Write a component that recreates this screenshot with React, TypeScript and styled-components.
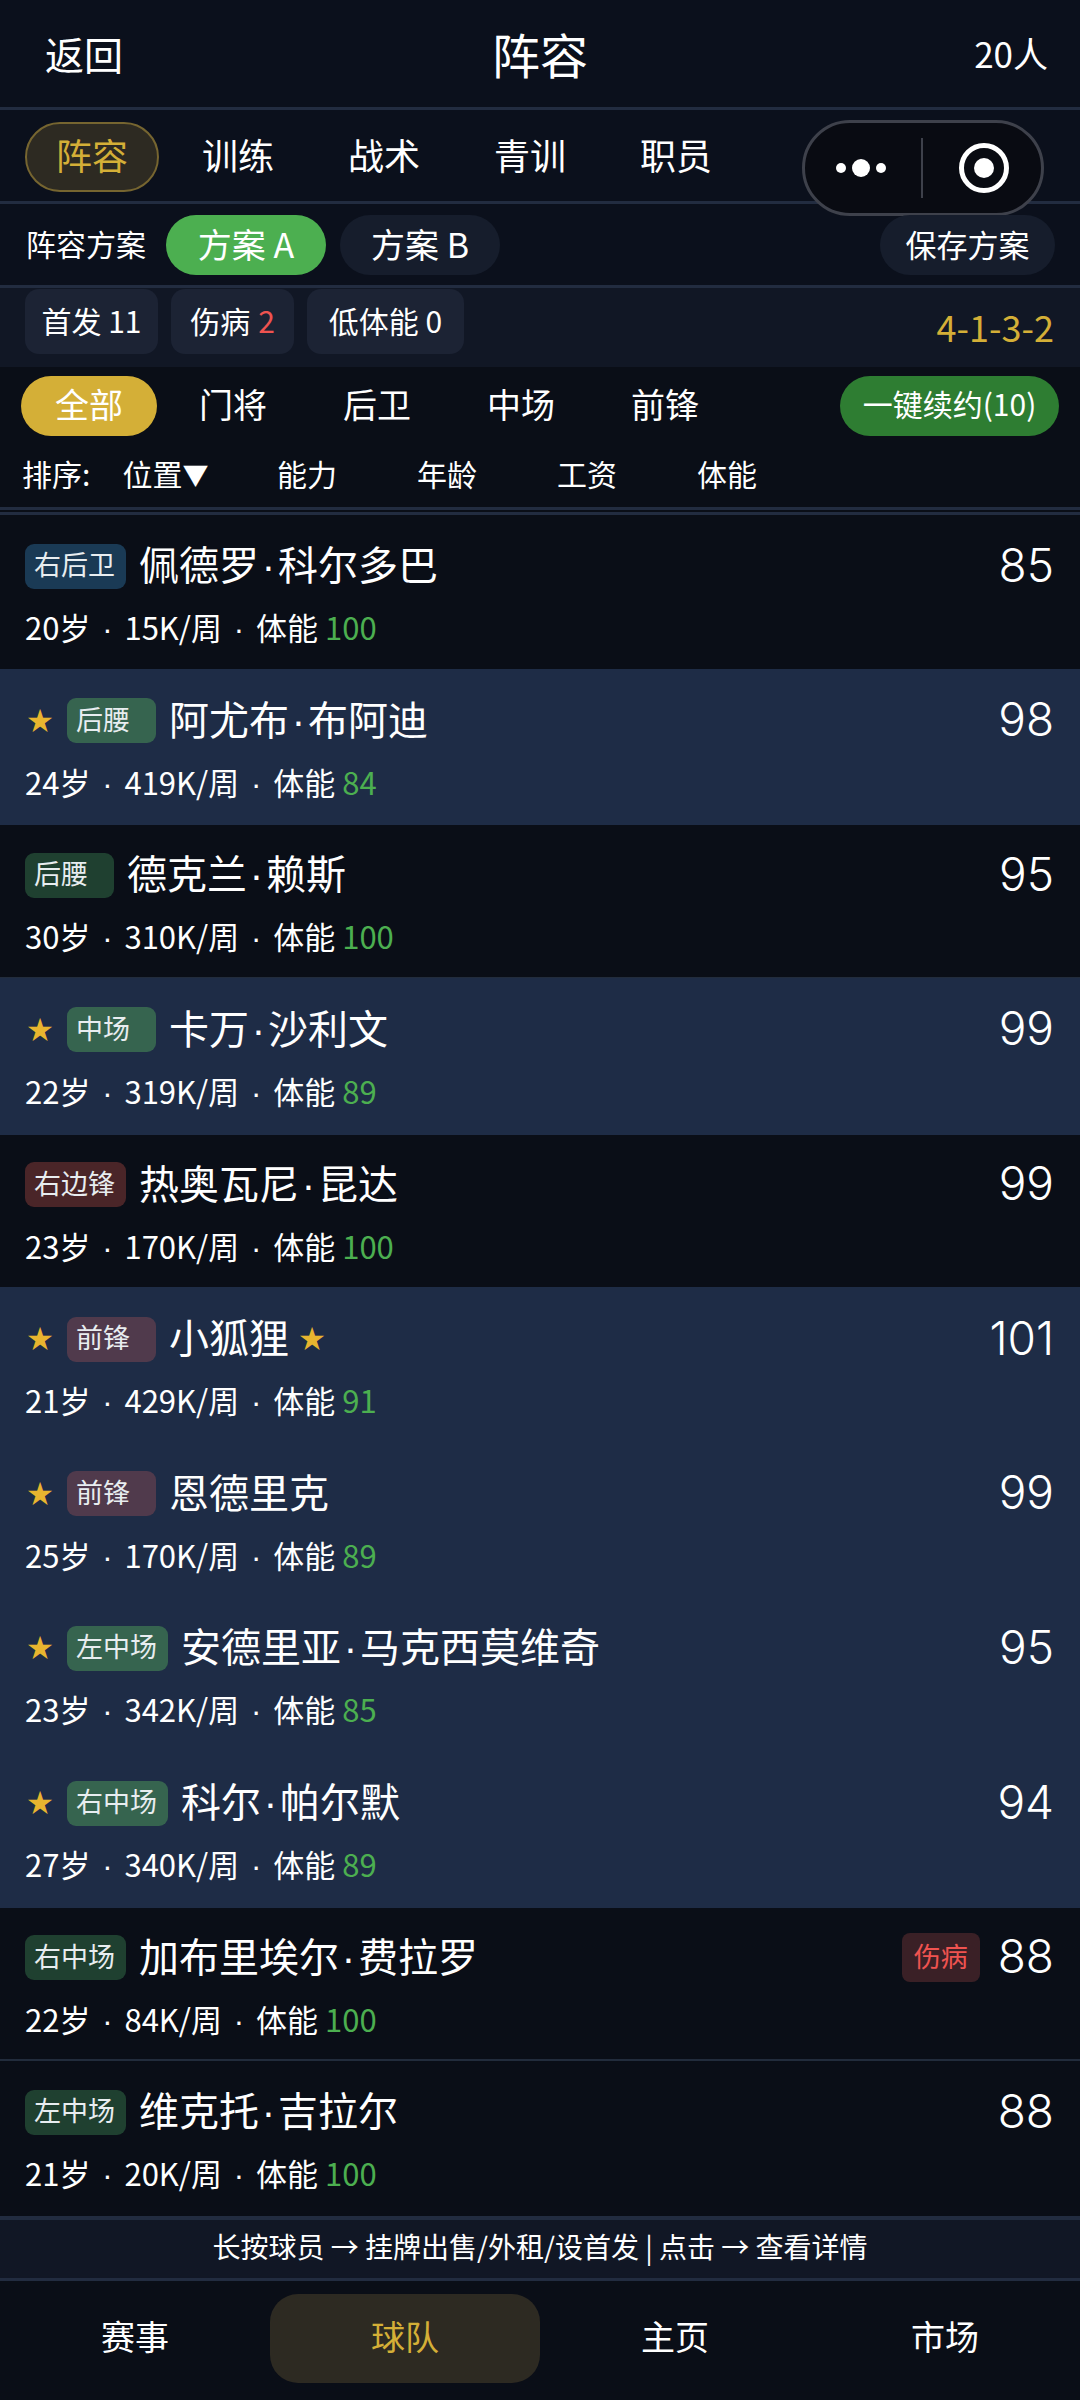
import styled, { createGlobalStyle } from "styled-components";

const Global = createGlobalStyle`
  * { box-sizing: border-box; }
  html, body { margin: 0; padding: 0; background: #0a0e17; }
  body { font-family: "Noto Sans CJK SC", "Noto Sans", sans-serif; color: #fff; }
`;

const Page = styled.div`
  position: relative;
  width: 1080px;
  height: 2400px;
  overflow: hidden;
  background: #0a0e17;
  display: flex;
  flex-direction: column;
`;

const Header = styled.div`
  height: 110px;
  flex: none;
  display: grid;
  grid-template-columns: 1fr auto 1fr;
  align-items: center;
  padding: 0 32px 2px;
  background: #0b101c;
  border-bottom: 3px solid #222c40;
`;
const Back = styled.span`
  font-size: 39px;
  margin-left: 13px;
`;
const Title = styled.span`
  font-size: 48px;
`;
const Count = styled.span`
  font-size: 35px;
  text-align: right;
`;

const Tabs = styled.div`
  height: 94px;
  flex: none;
  display: flex;
  align-items: center;
  gap: 12px;
  padding: 3px 25px 0;
  background: #0b101c;
  border-bottom: 3px solid #222c40;
`;
const Tab = styled.div<{ $active?: boolean }>`
  width: 134px;
  height: 70px;
  padding-bottom: 6px;
  border-radius: 35px;
  display: flex;
  align-items: center;
  justify-content: center;
  font-size: 36px;
  color: ${(p) => (p.$active ? "#d4af37" : "#fff")};
  background: ${(p) => (p.$active ? "#2d2a22" : "transparent")};
  border: 2px solid ${(p) => (p.$active ? "#766530" : "transparent")};
`;

const Capsule = styled.div`
  position: absolute;
  left: 802px;
  top: 120px;
  width: 242px;
  height: 96px;
  border-radius: 48px;
  border: 3px solid #3e414b;
  background: #090b12;
  display: flex;
  align-items: center;
  justify-content: center;
`;

const Scheme = styled.div`
  height: 84px;
  flex: none;
  display: flex;
  align-items: center;
  padding: 0 26px;
  background: #0b101c;
  border-bottom: 3px solid #222c40;
`;
const SchemeLabel = styled.span`
  font-size: 30px;
  margin-right: 20px;
  padding-bottom: 3px;
`;
const SchemeBtn = styled.div<{ $active?: boolean }>`
  height: 60px;
  width: 160px;
  margin-right: 14px;
  padding-bottom: 2px;
  border-radius: 30px;
  display: flex;
  align-items: center;
  justify-content: center;
  font-size: 34px;
  background: ${(p) => (p.$active ? "#4caf50" : "#161d2c")};
`;
const SaveBtn = styled(SchemeBtn)`
  width: 175px;
  margin: 0 0 0 auto;
  font-size: 31px;
  transform: translateX(1px);
`;

const Stats = styled.div`
  height: 79px;
  flex: none;
  display: flex;
  align-items: flex-start;
  gap: 13px;
  padding: 1px 26px 0 25px;
  background: #111725;
`;
const Stat = styled.div<{ $w: number }>`
  width: ${(p) => p.$w}px;
  height: 65px;
  padding-bottom: 3px;
  border-radius: 14px;
  background: #1c2334;
  display: flex;
  align-items: center;
  justify-content: center;
  gap: 8px;
  font-size: 30px;
`;
const Red = styled.span`
  color: #ef5350;
`;
const Formation = styled.span`
  margin: 0 0 5px auto;
  align-self: center;
  font-size: 36px;
  color: #d4af37;
`;

const Filters = styled.div`
  height: 72px;
  flex: none;
  display: flex;
  align-items: flex-start;
  gap: 8px;
  padding: 9px 21px 0;
`;
const Filter = styled.div<{ $active?: boolean }>`
  width: 136px;
  height: 60px;
  padding-bottom: 6px;
  border-radius: 30px;
  display: flex;
  align-items: center;
  justify-content: center;
  font-size: 34px;
  background: ${(p) => (p.$active ? "#d4af37" : "transparent")};
`;
const Renew = styled.div`
  margin-left: auto;
  height: 60px;
  width: 219px;
  padding-bottom: 6px;
  border-radius: 30px;
  background: #2e7d32;
  display: flex;
  align-items: center;
  justify-content: center;
  font-size: 30px;
`;

const SortBar = styled.div`
  height: 71px;
  flex: none;
  display: flex;
  align-items: center;
  padding: 0 0 1px 22px;
  font-size: 30px;
  border-bottom: 3px solid #222c40;
`;
const SortLabel = styled.span`
  width: 75px;
`;
const SortItem = styled.span`
  width: 140px;
  text-align: center;
`;
const Caret = styled.span`
  font-size: 26px;
  margin-right: 3px;
  vertical-align: 1px;
`;
const Gap = styled.div`
  height: 5px;
  flex: none;
  border-bottom: 3px solid #222c40;
`;

const List = styled.div`
  flex: none;
  display: grid;
  grid-template-rows: repeat(11, 1fr);
  height: 1705px;
  border-bottom: 4px solid #222c40;
`;
const Row = styled.div<{ $starter?: boolean; $line?: boolean }>`
  position: relative;
  z-index: ${(p) => (p.$starter ? 1 : 0)};
  display: flex;
  flex-direction: column;
  padding: 28px 26px 0 25px;
  background: ${(p) => (p.$starter ? "#1e2c46" : "#0a0e17")};
  box-shadow: ${(p) => (p.$starter ? "0 1px 0 #1e2c46, 0 -1px 0 #1e2c46" : "none")};
  border-bottom: 2px solid ${(p) => (p.$line ? "#222c3c" : p.$starter ? "#1e2c46" : "transparent")};
`;
const Top = styled.div`
  display: flex;
  align-items: center;
  height: 46px;
`;
const Star = styled.span`
  color: #e8b52f;
  font-size: 26px;
  line-height: 1;
  display: inline-flex;
  margin-bottom: 4px;
`;
const LeadStar = styled(Star)`
  width: 42px;
  padding-left: 2px;
`;
const TailStar = styled(Star)`
  margin-left: 10px;
`;
const PosTag = styled.span<{ $bg: string; $wide: boolean }>`
  width: ${(p) => (p.$wide ? 101 : 89)}px;
  height: 45px;
  padding: 0 0 5px 9px;
  border-radius: 9px;
  background: ${(p) => p.$bg};
  font-size: 27px;
  display: flex;
  align-items: center;
  white-space: nowrap;
  color: #e8edf0;
`;
const Name = styled.span`
  margin-left: 13px;
  padding-bottom: 6px;
  font-size: 40px;
  white-space: nowrap;
`;
const NameDot = styled.span`
  display: inline-block;
  width: 19px;
  text-align: center;
  font-family: "Liberation Sans", sans-serif;
`;
const Injury = styled.span`
  margin-left: auto;
  width: 78px;
  height: 49px;
  padding-bottom: 4px;
  border-radius: 8px;
  background: #3a2026;
  color: #ef5350;
  font-size: 27px;
  display: flex;
  align-items: center;
  justify-content: center;
`;
const Score = styled.span<{ $pushed: boolean }>`
  margin-left: ${(p) => (p.$pushed ? "auto" : "18px")};
  padding-bottom: 3px;
  font-family: "Inter", "Noto Sans", sans-serif;
  font-weight: 300;
  font-size: 46px;
`;
const Meta = styled.div`
  margin-top: 16px;
  font-size: 31px;
  line-height: 44px;
  white-space: pre;
`;
const MetaDot = styled.span`
  display: inline-block;
  width: 34px;
  text-align: center;
  font-family: "Liberation Sans", sans-serif;
`;
const Green = styled.span`
  color: #4caf50;
`;

const Hint = styled.div`
  height: 61px;
  flex: none;
  padding-bottom: 6px;
  display: flex;
  align-items: center;
  justify-content: center;
  font-size: 28px;
  background: #111725;
  border-bottom: 3px solid #222c40;
`;
const Nav = styled.div`
  flex: 1;
  display: grid;
  grid-template-columns: repeat(4, 1fr);
  align-items: start;
  padding-top: 13px;
`;
const NavItem = styled.div<{ $active?: boolean }>`
  height: 89px;
  padding-bottom: 6px;
  border-radius: 28px;
  display: flex;
  align-items: center;
  justify-content: center;
  font-size: 34px;
  color: ${(p) => (p.$active ? "#d4af37" : "#fff")};
  background: ${(p) => (p.$active ? "#2d2a22" : "transparent")};
`;

type Player = {
  pos: string;
  first: string;
  last?: string;
  age: number;
  wage: string;
  stamina: number;
  score: number;
  starter?: boolean;
  tail?: boolean;
  injured?: boolean;
  line?: boolean;
};

const tagColours: Record<string, [string, string]> = {
  后卫: ["#1a3a55", "#1a3a55"],
  后腰: ["#36644f", "#1f4030"],
  中场: ["#36644f", "#1f4030"],
  前锋: ["#503a4c", "#4a2528"],
};

const tagBg = (p: Player) => {
  const key = p.pos.endsWith("卫") ? "后卫" : p.pos.endsWith("腰") ? "后腰" : p.pos.endsWith("场") ? "中场" : "前锋";
  return tagColours[key][p.starter ? 0 : 1];
};

const players: Player[] = [
  { pos: "右后卫", first: "佩德罗", last: "科尔多巴", age: 20, wage: "15K", stamina: 100, score: 85 },
  { pos: "后腰", first: "阿尤布", last: "布阿迪", age: 24, wage: "419K", stamina: 84, score: 98, starter: true },
  { pos: "后腰", first: "德克兰", last: "赖斯", age: 30, wage: "310K", stamina: 100, score: 95, line: true },
  { pos: "中场", first: "卡万", last: "沙利文", age: 22, wage: "319K", stamina: 89, score: 99, starter: true },
  { pos: "右边锋", first: "热奥瓦尼", last: "昆达", age: 23, wage: "170K", stamina: 100, score: 99 },
  { pos: "前锋", first: "小狐狸", age: 21, wage: "429K", stamina: 91, score: 101, starter: true, tail: true },
  { pos: "前锋", first: "恩德里克", age: 25, wage: "170K", stamina: 89, score: 99, starter: true },
  { pos: "左中场", first: "安德里亚", last: "马克西莫维奇", age: 23, wage: "342K", stamina: 85, score: 95, starter: true },
  { pos: "右中场", first: "科尔", last: "帕尔默", age: 27, wage: "340K", stamina: 89, score: 94, starter: true },
  { pos: "右中场", first: "加布里埃尔", last: "费拉罗", age: 22, wage: "84K", stamina: 100, score: 88, injured: true, line: true },
  { pos: "左中场", first: "维克托", last: "吉拉尔", age: 21, wage: "20K", stamina: 100, score: 88 },
];

export default function App() {
  return (
    <Page>
      <Global />
      <Header>
        <Back>返回</Back>
        <Title>阵容</Title>
        <Count>20人</Count>
      </Header>
      <Tabs>
        <Tab $active>阵容</Tab>
        <Tab>训练</Tab>
        <Tab>战术</Tab>
        <Tab>青训</Tab>
        <Tab>职员</Tab>
      </Tabs>
      <Capsule>
        <svg width="236" height="90" viewBox="0 0 236 90">
          <circle cx="36" cy="45" r="5" fill="#fff" />
          <circle cx="56" cy="45" r="9" fill="#fff" />
          <circle cx="76" cy="45" r="5" fill="#fff" />
          <rect x="116" y="15" width="2" height="60" fill="#3e414b" />
          <circle cx="179" cy="45" r="22.5" fill="none" stroke="#fff" strokeWidth="5" />
          <circle cx="179" cy="45" r="10" fill="#fff" />
        </svg>
      </Capsule>
      <Scheme>
        <SchemeLabel>阵容方案</SchemeLabel>
        <SchemeBtn $active>方案 A</SchemeBtn>
        <SchemeBtn>方案 B</SchemeBtn>
        <SaveBtn>保存方案</SaveBtn>
      </Scheme>
      <Stats>
        <Stat $w={133}>首发 11</Stat>
        <Stat $w={123}>
          伤病 <Red>2</Red>
        </Stat>
        <Stat $w={157}>低体能 0</Stat>
        <Formation>4-1-3-2</Formation>
      </Stats>
      <Filters>
        <Filter $active>全部</Filter>
        <Filter>门将</Filter>
        <Filter>后卫</Filter>
        <Filter>中场</Filter>
        <Filter>前锋</Filter>
        <Renew>一键续约(10)</Renew>
      </Filters>
      <SortBar>
        <SortLabel>排序:</SortLabel>
        <SortItem>
          位置<Caret>▼</Caret>
        </SortItem>
        <SortItem>能力</SortItem>
        <SortItem>年龄</SortItem>
        <SortItem>工资</SortItem>
        <SortItem>体能</SortItem>
      </SortBar>
      <Gap />
      <List>
        {players.map((p) => (
          <Row key={p.first} $starter={p.starter} $line={p.line}>
            <Top>
              {p.starter && <LeadStar>★</LeadStar>}
              <PosTag $bg={tagBg(p)} $wide={p.pos.length > 2}>
                {p.pos}
              </PosTag>
              <Name>
                {p.first}
                {p.last && <NameDot>·</NameDot>}
                {p.last}
              </Name>
              {p.tail && <TailStar>★</TailStar>}
              {p.injured && <Injury>伤病</Injury>}
              <Score $pushed={!p.injured}>{p.score}</Score>
            </Top>
            <Meta>
              {p.age}岁<MetaDot>·</MetaDot>
              {p.wage}/周<MetaDot>·</MetaDot>
              体能 <Green>{p.stamina}</Green>
            </Meta>
          </Row>
        ))}
      </List>
      <Hint>长按球员 → 挂牌出售/外租/设首发 | 点击 → 查看详情</Hint>
      <Nav>
        <NavItem>赛事</NavItem>
        <NavItem $active>球队</NavItem>
        <NavItem>主页</NavItem>
        <NavItem>市场</NavItem>
      </Nav>
    </Page>
  );
}
